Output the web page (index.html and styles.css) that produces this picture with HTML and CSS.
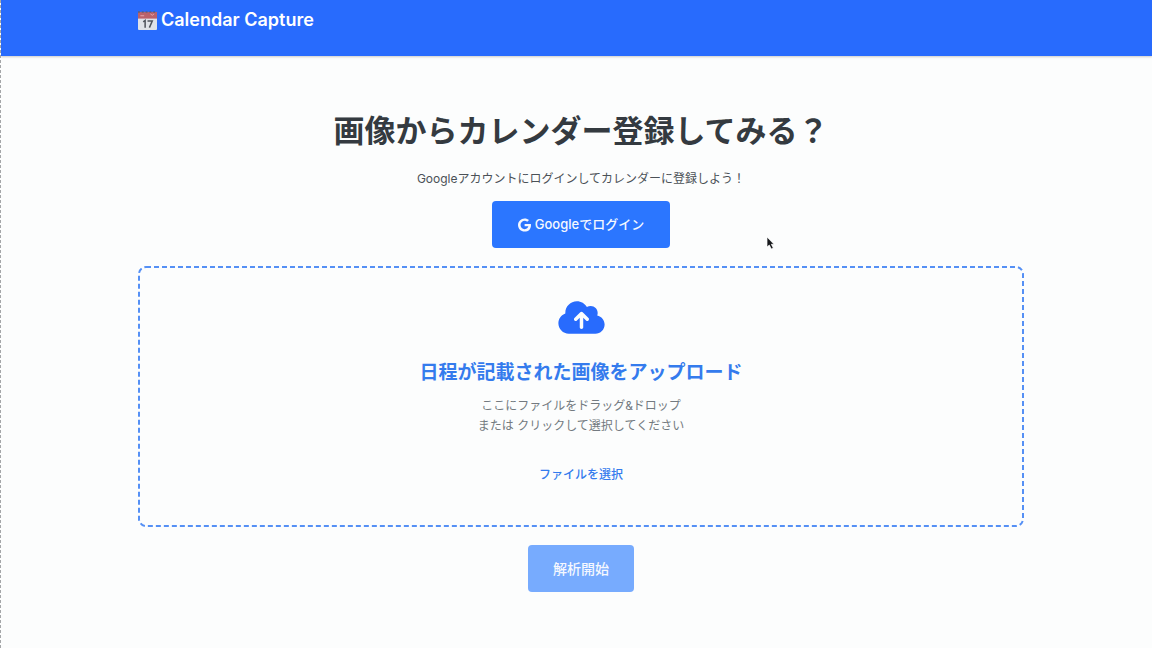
FILE: index.html
```html
<!DOCTYPE html>
<html lang="ja">
<head>
<meta charset="utf-8">
<meta name="viewport" content="width=device-width, initial-scale=1">
<title>Calendar Capture</title>
<link rel="stylesheet" href="styles.css">
</head>
<body>
<header class="header">
  <div class="container brand">
    <svg class="brand-icon" viewBox="0 0 20 20" aria-hidden="true">
      <rect x="0" y="1" width="20" height="19" rx="1" fill="#dfe2e8"/>
      <path d="M0 8V1h20v7z" fill="#b9626b"/>
      <path d="M0 1h20" stroke="#59617c" stroke-width="1.5" stroke-dasharray="2 2"/>
      <path d="M2.5 5h4M13 3l2 1.500L17 3" stroke="#e5a8ad" fill="none"/>
      <path d="M5.500 11.500L7.500 10v7.500M10 10.500h5l-3 7" stroke="#50545c" stroke-width="1.600" fill="none"/>
    </svg>
    <span class="brand-name">Calendar Capture</span>
  </div>
</header>
<main class="main">
  <div class="container content">
    <h1 class="title">画像からカレンダー登録してみる？</h1>
    <p class="lead">Googleアカウントにログインしてカレンダーに登録しよう！</p>
    <button class="button login" type="button">
      <svg class="google-icon" viewBox="0 0 488 512" aria-hidden="true"><path fill="currentColor" d="M488 261.8C488 403.3 391.1 504 248 504 110.8 504 0 393.2 0 256S110.8 8 248 8c66.8 0 123 24.5 166.3 64.9l-67.500 64.900C258.5 52.6 94.3 116.6 94.3 256c0 86.5 69.1 156.6 153.7 156.6 98.2 0 135-70.4 140.8-106.900H248v-85.300h236.100c2.3 12.7 3.9 24.9 3.9 41.400z"/></svg>
      <span>Googleでログイン</span>
    </button>
    <section class="dropzone">
      <svg class="dropzone-outline" aria-hidden="true"><rect class="outline-rect" x="1" y="1" rx="7"/></svg>
      <svg class="cloud-icon" viewBox="0 0 640 512" aria-hidden="true"><path fill="currentColor" d="M144 480C64.5 480 0 415.5 0 336c0-62.8 40.2-116.2 96.2-135.9c-.1-2.7-.2-5.4-.2-8.1c0-88.4 71.6-160 160-160c59.3 0 111 32.2 138.7 80.2C409.9 102 428.3 96 448 96c53 0 96 43 96 96c0 12.2-2.3 23.8-6.4 34.6C596 238.4 640 290.1 640 352c0 70.7-57.3 128-128 128H144zm79-217c-9.4 9.4-9.4 24.6 0 33.9s24.6 9.4 33.9 0l39-39V392c0 13.3 10.7 24 24 24s24-10.7 24-24V257.9l39 39c9.4 9.4 24.6 9.4 33.9 0s9.4-24.6 0-33.9l-80-80c-9.4-9.4-24.6-9.4-33.9 0l-80 80z"/></svg>
      <h2 class="dropzone-title">日程が記載された画像をアップロード</h2>
      <p class="hint">ここにファイルをドラッグ&amp;ドロップ<br>または クリックして選択してください</p>
      <button class="choose" type="button">ファイルを選択</button>
    </section>
    <button class="button analyze" type="button" disabled>解析開始</button>
  </div>
</main>
<svg class="pointer" viewBox="0 0 9 14" aria-hidden="true"><path d="M1 1v10l2.300-2 2 4 2-1-2-3.700H8z" fill="#17191c" stroke="#fff" stroke-width=".7"/></svg>
</body>
</html>
```
FILE: styles.css
```css
* {
  box-sizing: border-box;
}

body {
  margin: 0;
  min-height: 100vh;
  border-left: 1px dashed #a4a6a8;
  background: #fcfdfd;
  color: #343a40;
  font-family: Inter, "Noto Sans CJK JP", sans-serif;
  font-size: 12px;
  line-height: 20px;
}

h1, h2, p {
  margin: 0;
}

button {
  font-family: inherit;
  border: 0;
}

.header {
  min-height: 56px;
  padding: 8px 0 0 9px;
  background: #286bfd;
  box-shadow: 0 1px 2px rgba(0, 0, 0, 0.2);
}

.container {
  width: 90%;
  max-width: 886px;
  margin: 0 auto;
}

.brand {
  display: flex;
  align-items: center;
  gap: 4px;
  color: #fff;
}

.brand-icon {
  width: 19px;
  height: 19px;
}

.brand-name {
  font-size: 18px;
  font-weight: 600;
  line-height: 24px;
}

.main {
  padding: 55px 0 48px 9px;
}

.content {
  display: flex;
  flex-direction: column;
  align-items: center;
}

.title {
  font-size: 31px;
  font-weight: 700;
  line-height: 40px;
}

.lead {
  margin-top: 18px;
  color: #4b5157;
}

.button {
  display: flex;
  align-items: center;
  gap: 4px;
  padding: 13px 25px;
  border-radius: 4px;
  background: #2b76ff;
  color: #f5f8ff;
  font-weight: 500;
  line-height: 21px;
}

.login {
  margin-top: 12px;
  padding: 13px 26px;
  font-size: 13px;
}

.google-icon {
  width: 13px;
  height: 14px;
}

.dropzone {
  position: relative;
  display: flex;
  flex-direction: column;
  align-items: center;
  align-self: stretch;
  margin-top: 18px;
  padding: 33px 16px 42px;
}

.dropzone-outline {
  position: absolute;
  inset: 0;
  width: 100%;
  height: 100%;
  pointer-events: none;
}

.outline-rect {
  width: calc(100% - 2px);
  height: calc(100% - 2px);
  fill: none;
  stroke: #5590f5;
  stroke-width: 2px;
  stroke-dasharray: 5 3;
}

.cloud-icon {
  width: 47px;
  height: 37px;
  color: #286bfd;
}

.dropzone-title {
  margin-top: 24px;
  color: #347bed;
  font-size: 19px;
  font-weight: 700;
  line-height: 26px;
}

.hint {
  margin-top: 10px;
  color: #737a80;
  text-align: center;
}

.choose {
  margin-top: 28px;
  padding: 0 12px;
  background: transparent;
  color: #347bed;
  font-size: 12px;
  font-weight: 500;
  line-height: 21px;
}

.analyze {
  margin-top: 18px;
  background: #77abfe;
  font-size: 14px;
}

.pointer {
  position: absolute;
  top: 236px;
  left: 766px;
  width: 9px;
  height: 14px;
}
```
